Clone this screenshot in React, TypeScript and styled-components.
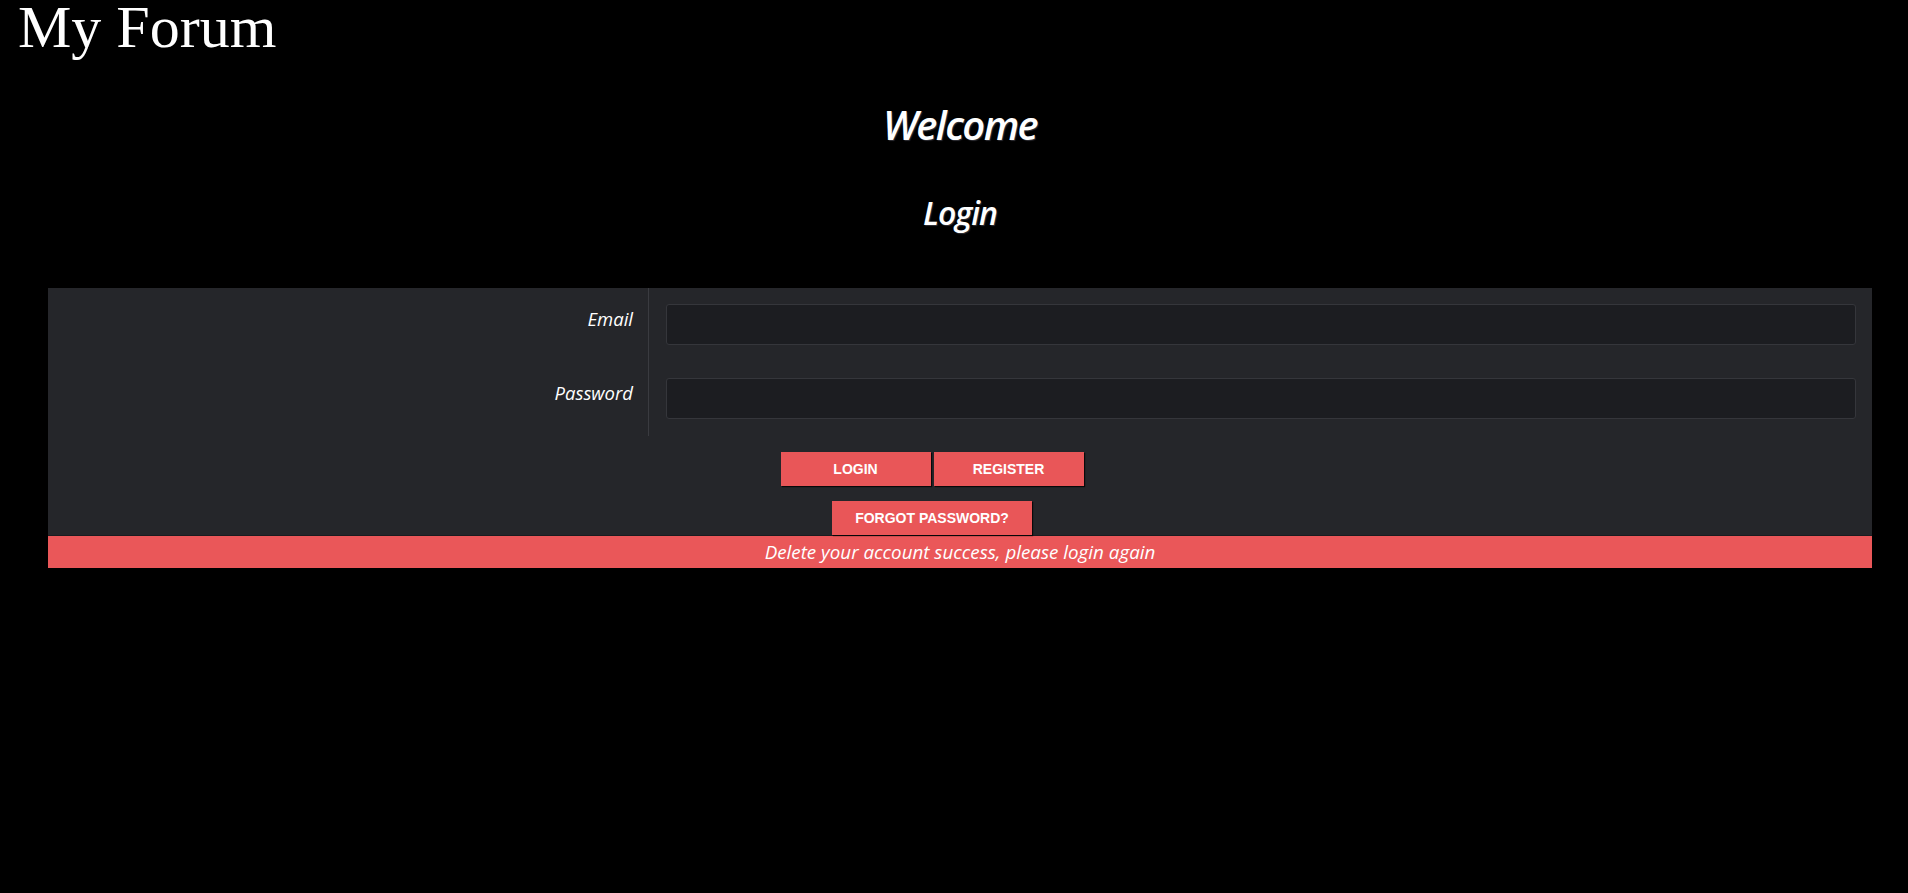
import React from "react";
import styled, { createGlobalStyle } from "styled-components";

const GlobalStyle = createGlobalStyle`
  html, body {
    margin: 0;
    padding: 0;
    background: #000;
  }
  body {
    font-family: "Liberation Serif", "Times New Roman", serif;
    color: #fff;
  }
  * { box-sizing: border-box; }
`;

const SiteTitle = styled.h1`
  margin: 0;
  padding: 0 0 0 18px;
  font-family: "Liberation Serif", "Times New Roman", serif;
  font-weight: normal;
  font-size: 60px;
  line-height: 55px;
  color: #fff;
`;

const Main = styled.main`
  padding: 0 36px 0 48px;
`;

const Heading = styled.h2<{ $size: number; $top: number; $tracking: number }>`
  margin: ${(p) => p.$top}px 0 0;
  text-align: center;
  font-family: "Open Sans", "Noto Sans", sans-serif;
  font-style: italic;
  font-weight: 600;
  font-stretch: 88%;
  font-size: ${(p) => p.$size}px;
  letter-spacing: ${(p) => p.$tracking}px;
  line-height: ${(p) => Math.round(p.$size * 1.2)}px;
  color: #fff;
  text-shadow: 1px 1px 1px rgba(80, 80, 90, 0.6);
`;

const Panel = styled.section`
  margin-top: 56px;
  background: #25262a;
`;

const FormGrid = styled.div`
  display: grid;
  grid-template-columns: 601px 1fr;
`;

const LabelCell = styled.label`
  border-right: 1px solid #3a3b40;
  padding: 19px 15px 0 0;
  height: 74px;
  text-align: right;
  font-family: "Open Sans", "Noto Sans", sans-serif;
  font-style: italic;
  font-stretch: 92%;
  font-size: 18.5px;
  line-height: 24px;
  color: #fff;
`;

const FieldCell = styled.div`
  padding: 16px 16px 17px 17px;
`;

const TextInput = styled.input`
  display: block;
  width: 100%;
  height: 41px;
  margin: 0;
  padding: 0 10px;
  background: #1c1d21;
  border: 1px solid #35363b;
  border-radius: 3px;
  color: #fff;
  font-family: "Open Sans", sans-serif;
  font-size: 15px;
  outline: none;
`;

const ButtonRow = styled.div<{ $top: number }>`
  display: flex;
  justify-content: center;
  gap: 3px;
  margin-top: ${(p) => p.$top}px;
  padding-right: 56px;
`;

const RedButton = styled.button<{ $width: number }>`
  width: ${(p) => p.$width}px;
  height: 34px;
  margin: 0;
  padding: 0;
  border: none;
  background: #e95658;
  box-shadow: 1px 1px 1px rgba(0, 0, 0, 0.75);
  color: #fff;
  font-family: "Liberation Sans", Arial, sans-serif;
  font-weight: 700;
  font-size: 14px;
  text-transform: uppercase;
  cursor: pointer;
`;

const Banner = styled.div`
  height: 33px;
  border-top: 1px solid #1b1c20;
  background: #ea5759;
  text-align: center;
  font-family: "Open Sans", "Noto Sans", sans-serif;
  font-style: italic;
  font-size: 18.8px;
  line-height: 32px;
  color: #fff;
`;

export default function App() {
  return (
    <>
      <GlobalStyle />
      <SiteTitle>My Forum</SiteTitle>
      <Main>
        <Heading $size={40} $top={46} $tracking={-1.6}>Welcome</Heading>
        <Heading $size={32} $top={45} $tracking={-1}>Login</Heading>
        <Panel>
          <FormGrid>
            <LabelCell htmlFor="email">Email</LabelCell>
            <FieldCell>
              <TextInput id="email" type="email" />
            </FieldCell>
            <LabelCell htmlFor="password">Password</LabelCell>
            <FieldCell>
              <TextInput id="password" type="password" />
            </FieldCell>
          </FormGrid>
          <ButtonRow $top={16}>
            <RedButton $width={150}>Login</RedButton>
            <RedButton $width={150}>Register</RedButton>
          </ButtonRow>
          <ButtonRow $top={15}>
            <RedButton $width={200}>Forgot password?</RedButton>
          </ButtonRow>
        </Panel>
        <Banner>Delete your account success, please login again</Banner>
      </Main>
    </>
  );
}
